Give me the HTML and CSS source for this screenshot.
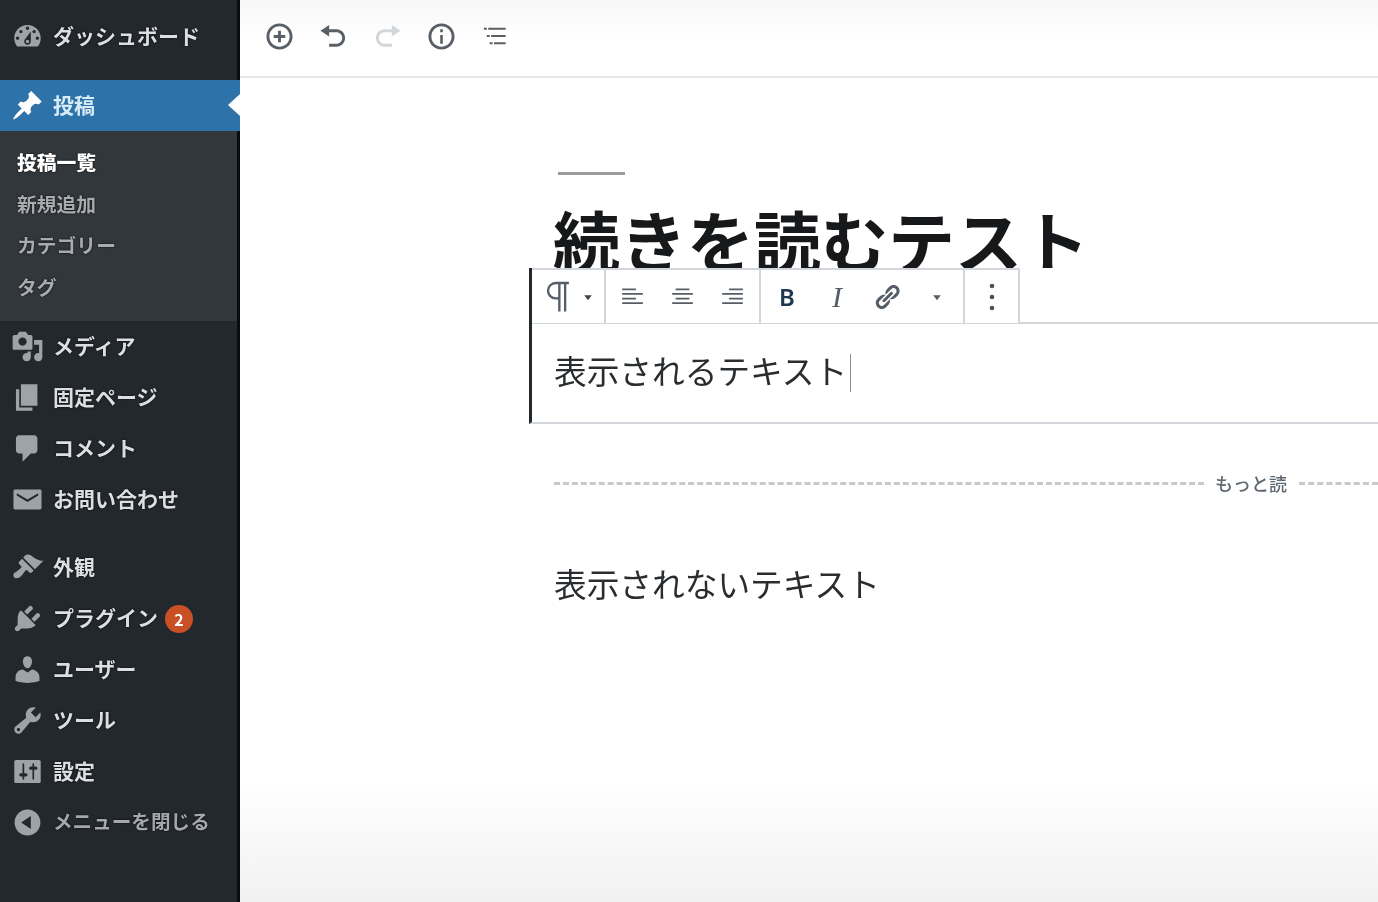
FILE: index.html
```html
<!DOCTYPE html>
<html lang="ja">
<head>
    <meta charset="UTF-8">
    <meta name="viewport" content="width=device-width, initial-scale=1.0">
    <title>投稿を編集</title>
    <link rel="stylesheet" href="styles.css">
</head>
<body>

<div class="app">
    <nav class="sidebar">
        <ul class="menu menu-first">
            <li class="menu-item">
                <svg class="menu-icon" viewBox="0 0 20 20"><path d="M3.76 16h12.48c1.1-1.37 1.76-3.11 1.76-5 0-4.42-3.58-8-8-8s-8 3.58-8 8c0 1.89.66 3.63 1.76 5zM10 4c.55 0 1 .45 1 1s-.45 1-1 1-1-.45-1-1 .45-1 1-1zM6 6c.55 0 1 .45 1 1s-.45 1-1 1-1-.45-1-1 .45-1 1-1zm8 0c.55 0 1 .45 1 1s-.45 1-1 1-1-.45-1-1 .45-1 1-1zm-5.37 5.55L12 7v6c0 1.1-.9 2-2 2s-2-.9-2-2c0-.57.24-1.08.63-1.45zM4 10c.55 0 1 .45 1 1s-.45 1-1 1-1-.45-1-1 .45-1 1-1zm12 0c.55 0 1 .45 1 1s-.45 1-1 1-1-.45-1-1 .45-1 1-1zm-5 3c0-.55-.45-1-1-1s-1 .45-1 1 .45 1 1 1 1-.45 1-1z"/></svg>
                <span class="menu-label">ダッシュボード</span>
            </li>
        </ul>
        <ul class="menu menu-posts">
            <li class="menu-item active">
                <svg class="menu-icon" viewBox="0 0 20 20"><path d="M10.44 3.02l1.82-1.82 6.36 6.35-1.83 1.82c-1.05-.68-2.48-.57-3.41.36l-.75.75c-.92.93-1.04 2.35-.35 3.41l-1.83 1.82-2.41-2.41-2.8 2.79c-.42.42-3.38 2.71-3.8 2.29s1.86-3.39 2.28-3.81l2.79-2.79L4.1 9.36l1.83-1.82c1.05.69 2.48.57 3.4-.36l.75-.75c.93-.92 1.05-2.35.36-3.41z"/></svg>
                <span class="menu-label">投稿</span>
            </li>
        </ul>
        <ul class="submenu">
            <li class="current">投稿一覧</li>
            <li>新規追加</li>
            <li>カテゴリー</li>
            <li>タグ</li>
        </ul>
        <ul class="menu">
            <li class="menu-item">
                <svg class="menu-icon" viewBox="0 0 20 20"><path d="M13 11V4c0-.55-.45-1-1-1h-1.67L9 1H5L3.67 3H2c-.55 0-1 .45-1 1v7c0 .55.45 1 1 1h10c.55 0 1-.45 1-1zM7 4.5c1.38 0 2.5 1.12 2.5 2.5S8.38 9.5 7 9.5 4.5 8.38 4.5 7 5.62 4.5 7 4.5zM14 6h5v10.5c0 1.38-1.12 2.5-2.5 2.5S14 17.88 14 16.5s1.12-2.5 2.5-2.5c.17 0 .34.02.5.05V9h-3V6zm-4 8.05V13h2v3.5c0 1.38-1.12 2.5-2.5 2.5S7 17.88 7 16.5 8.12 14 9.5 14c.17 0 .34.02.5.05z"/></svg>
                <span class="menu-label">メディア</span>
            </li>
            <li class="menu-item">
                <svg class="menu-icon" viewBox="0 0 20 20"><path d="M6 15V2h10v13H6zm-1 1h8v2H3V5h2v11z"/></svg>
                <span class="menu-label">固定ページ</span>
            </li>
            <li class="menu-item">
                <svg class="menu-icon" viewBox="0 0 20 20"><path d="M5 2h9c1.1 0 2 .9 2 2v7c0 1.1-.9 2-2 2h-2l-5 5v-5H5c-1.1 0-2-.9-2-2V4c0-1.1.9-2 2-2z"/></svg>
                <span class="menu-label">コメント</span>
            </li>
            <li class="menu-item">
                <svg class="menu-icon" viewBox="0 0 20 20"><path fill-rule="evenodd" d="M2.5 4h15c.55 0 1 .45 1 1v10c0 .55-.45 1-1 1h-15c-.55 0-1-.45-1-1V5c0-.55.45-1 1-1zm1 2.2v1.3l6.5 4 6.5-4V6.2L10 10z"/></svg>
                <span class="menu-label">お問い合わせ</span>
            </li>
        </ul>
        <ul class="menu menu-lower">
            <li class="menu-item">
                <svg class="menu-icon" viewBox="0 0 20 20"><path d="M14.48 11.06L7.41 3.99l1.5-1.5c.5-.56 2.3-.47 3.51.32 1.21.8 1.43 1.28 2.91 2.1 1.18.64 2.45 1.26 4.45.85zm-.71.71L6.7 4.7 4.93 6.47c-.39.39-.39 1.02 0 1.41l1.06 1.06c.39.39.39 1.03 0 1.42-.6.6-1.43 1.11-2.21 1.69-.35.26-.7.53-1.01.84C1.43 13.23.99 14.95 2.03 16c1.04 1 2.78.57 4.13-.79.31-.31.58-.66.85-1.01.58-.78 1.09-1.61 1.69-2.21.39-.39 1.02-.39 1.41 0l1.06 1.06c.39.39 1.02.39 1.41 0z"/></svg>
                <span class="menu-label">外観</span>
            </li>
            <li class="menu-item">
                <svg class="menu-icon" viewBox="0 0 20 20"><path d="M13.11 4.36L9.87 7.6 8 5.73l3.24-3.24c.35-.34 1.05-.2 1.56.32.52.51.66 1.21.31 1.55zm-8 1.77l.91-1.12 9.01 9.01-1.19.84c-.71.71-2.63 1.16-3.82 1.16H6.14L4.9 17.26c-.59.59-1.54.59-2.12 0-.59-.58-.59-1.53 0-2.12l1.24-1.24v-3.88c0-1.13.4-3.19 1.09-3.89zm7.26 3.97l3.24-3.24c.34-.35 1.04-.21 1.55.31.52.51.66 1.21.31 1.55l-3.24 3.25z"/></svg>
                <span class="menu-label">プラグイン</span>
                <span class="badge">2</span>
            </li>
            <li class="menu-item">
                <svg class="menu-icon" viewBox="0 0 20 20"><path d="M10 9.25c-2.27 0-2.73-3.44-2.73-3.44C7 4.02 7.82 2 9.97 2c2.16 0 2.98 2.02 2.71 3.81 0 0-.41 3.44-2.68 3.44zm0 2.57L12.72 10c2.39 0 4.52 2.33 4.52 4.53v2.49s-3.65 1.13-7.24 1.13c-3.65 0-7.24-1.13-7.24-1.13v-2.49c0-2.25 1.94-4.48 4.47-4.48z"/></svg>
                <span class="menu-label">ユーザー</span>
            </li>
            <li class="menu-item">
                <svg class="menu-icon" viewBox="0 0 20 20"><path d="M16.68 9.77c-1.34 1.34-3.3 1.67-4.95.99l-5.41 6.52c-.99.99-2.59.99-3.58 0s-.99-2.59 0-3.57l6.52-5.42c-.68-1.65-.35-3.61.99-4.95 1.28-1.28 3.12-1.62 4.72-1.06l-2.89 2.89 2.82 2.82 2.86-2.87c.53 1.58.18 3.39-1.08 4.65zM3.81 16.21c.4.39 1.04.39 1.43 0 .4-.4.4-1.04 0-1.43-.39-.4-1.03-.4-1.43 0-.39.39-.39 1.03 0 1.43z"/></svg>
                <span class="menu-label">ツール</span>
            </li>
            <li class="menu-item">
                <svg class="menu-icon" viewBox="0 0 20 20"><path d="M18 16V4c0-.55-.45-1-1-1H3c-.55 0-1 .45-1 1v12c0 .55.45 1 1 1h14c.55 0 1-.45 1-1zM8 11h1c.55 0 1 .45 1 1s-.45 1-1 1H8v1.5c0 .28-.22.5-.5.5s-.5-.22-.5-.5V13H6c-.55 0-1-.45-1-1s.45-1 1-1h1V5.5c0-.28.22-.5.5-.5s.5.22.5.5V11zm5-2h-1c-.55 0-1-.45-1-1s.45-1 1-1h1V5.5c0-.28.22-.5.5-.5s.5.22.5.5V7h1c.55 0 1 .45 1 1s-.45 1-1 1h-1v5.5c0 .28-.22.5-.5.5s-.5-.22-.5-.5V9z"/></svg>
                <span class="menu-label">設定</span>
            </li>
            <li class="menu-item collapse">
                <svg class="menu-icon" viewBox="0 0 20 20"><path d="M10 2.16c4.33 0 7.84 3.51 7.84 7.84s-3.51 7.84-7.84 7.84S2.16 14.33 2.16 10 5.71 2.16 10 2.16zm2 11.72V6.12L6.18 9.97z"/></svg>
                <span class="menu-label">メニューを閉じる</span>
            </li>
        </ul>
    </nav>

    <main class="main">
        <header class="topbar">
            <div class="top-btn">
                <svg viewBox="0 0 20 20"><path d="M10 1c-5 0-9 4-9 9s4 9 9 9 9-4 9-9-4-9-9-9zm0 16c-3.9 0-7-3.1-7-7s3.1-7 7-7 7 3.1 7 7-3.1 7-7 7zm1-11H9v3H6v2h3v3h2v-3h3V9h-3V6z"/></svg>
            </div>
            <div class="top-btn">
                <svg viewBox="0 0 20 20"><path d="M12 5H7V2L1 6l6 4V7h5c2.2 0 4 1.8 4 4s-1.8 4-4 4H7v2h5c3.3 0 6-2.7 6-6s-2.7-6-6-6z"/></svg>
            </div>
            <div class="top-btn disabled">
                <svg viewBox="0 0 20 20"><path d="M8 5h5V2l6 4-6 4V7H8c-2.2 0-4 1.8-4 4s1.8 4 4 4h5v2H8c-3.3 0-6-2.7-6-6s2.7-6 6-6z"/></svg>
            </div>
            <div class="top-btn">
                <svg viewBox="0 0 20 20"><path d="M10 1c-5 0-9 4-9 9s4 9 9 9 9-4 9-9-4-9-9-9zm0 16c-3.9 0-7-3.1-7-7s3.1-7 7-7 7 3.1 7 7-3.1 7-7 7zM9.1 9h1.8v6H9.1zm0-4h1.8v2H9.1z"/></svg>
            </div>
            <div class="top-btn">
                <svg viewBox="0 0 20 20"><path d="M2 4h2v1.4H2zm3 0h12v1.4H5zM4 9h2v1.4H4zm3 0h10v1.4H7zm-1 5h2v1.4H6zm3 0h8v1.4H9z"/></svg>
            </div>
        </header>

        <section class="editor">
            <div class="title-area">
                <div class="title-sep"></div>
                <h1 class="post-title">続きを読むテスト</h1>
            </div>

            <div class="block selected">
                <div class="block-toolbar">
                    <div class="tool-group group-type">
                        <svg class="tool-para" viewBox="0 0 20 20"><path d="M15.5 2.2H8.2a4.3 4.3 0 0 0 0 8.6h1.6M10.2 2.2V18M13.4 2.2V18"/></svg>
                        <svg class="caret" viewBox="0 0 8 8"><path d="M1 2.5h6L4 6.5z"/></svg>
                    </div>
                    <div class="tool-group group-align">
                        <div class="tool"><svg viewBox="0 0 20 20"><path d="M1 3h12v1.5H1zm0 4h18v1.5H1zm0 4h12v1.5H1zm0 4h18v1.5H1z"/></svg></div>
                        <div class="tool"><svg viewBox="0 0 20 20"><path d="M4 3h12v1.5H4zM1 7h18v1.5H1zm3 4h12v1.5H4zm-3 4h18v1.5H1z"/></svg></div>
                        <div class="tool"><svg viewBox="0 0 20 20"><path d="M7 3h12v1.5H7zM1 7h18v1.5H1zm6 4h12v1.5H7zm-6 4h18v1.5H1z"/></svg></div>
                    </div>
                    <div class="tool-group group-format">
                        <div class="tool tool-bold">B</div>
                        <div class="tool tool-italic">I</div>
                        <div class="tool tool-link"><svg viewBox="0 0 20 20"><path d="M17.74 2.76c1.68 1.69 1.68 4.41 0 6.1l-1.53 1.52c-1.12 1.12-2.7 1.47-4.14 1.09l2.62-2.61.76-.77.76-.76c.84-.84.84-2.2 0-3.04-.84-.85-2.2-.85-3.04 0l-.77.76-3.38 3.38c-.37-1.44-.02-3.02 1.1-4.14l1.52-1.53c1.69-1.68 4.42-1.68 6.1 0zM8.59 13.43l5.34-5.34c.42-.42.42-1.1 0-1.52-.44-.43-1.13-.39-1.53 0l-5.33 5.34c-.42.42-.42 1.1 0 1.52.44.43 1.13.39 1.52 0zm-.76 2.29l4.14-4.15c.38 1.44.03 3.02-1.09 4.14l-1.52 1.53c-1.69 1.68-4.41 1.68-6.1 0-1.68-1.68-1.68-4.42 0-6.1l1.53-1.52c1.12-1.12 2.7-1.47 4.14-1.1l-4.14 4.15c-.85.84-.85 2.2 0 3.05.84.84 2.2.84 3.04 0z"/></svg></div>
                        <div class="tool tool-caret"><svg class="caret" viewBox="0 0 8 8"><path d="M1 2.5h6L4 6.5z"/></svg></div>
                    </div>
                    <div class="tool-group group-more">
                        <svg class="tool-dots" viewBox="0 0 6 30"><circle cx="3" cy="4" r="2.3"/><circle cx="3" cy="15" r="2.3"/><circle cx="3" cy="26" r="2.3"/></svg>
                    </div>
                </div>
                <div class="block-body">
                    <p class="para">表示されるテキスト</p>
                    <span class="cursor"></span>
                </div>
            </div>

            <div class="more-block">
                <div class="more-line more-line-left"></div>
                <span class="more-label">もっと読む</span>
                <div class="more-line"></div>
            </div>

            <p class="para para-plain">表示されないテキスト</p>
        </section>
    </main>
</div>

</body>
</html>
```

FILE: styles.css
```css
* {
    box-sizing: border-box;
}
html, body {
    height: 100%;
}
body {
    margin: 0;
    overflow: hidden;
    font-family: "Noto Sans CJK JP", "Noto Sans", sans-serif;
    background-color: #fff;
}
ul {
    list-style: none;
    margin: 0;
    padding: 0;
}
.app {
    display: flex;
    height: 902px;
    filter: blur(0.7px);
}

/* sidebar */
.sidebar {
    width: 240px;
    flex-shrink: 0;
    background-color: #23282d;
    border-right: 3px solid #0b0c0d;
    padding-top: 11px;
}
.menu-first {
    margin-bottom: 18px;
}
.menu-lower {
    margin-top: 17px;
}
.menu-item {
    display: flex;
    align-items: center;
    height: 51px;
    padding-left: 11px;
    font-size: 21px;
    font-weight: 700;
    color: #dcdfe1;
    text-shadow: 0 0 2px #000;
    white-space: nowrap;
}
.menu-label {
    padding-bottom: 4px;
}
.menu-icon {
    width: 33px;
    height: 33px;
    margin-right: 9px;
    flex-shrink: 0;
    fill: #9ea3a8;
}
.menu-item.active {
    position: relative;
    margin-right: -3px;
    background-color: #2d72a9;
    color: #d8ecf7;
    text-shadow: none;
}
.menu-item.active .menu-icon {
    fill: #fff;
}
.menu-item.active::after {
    content: "";
    position: absolute;
    right: 0;
    top: 14px;
    border-style: solid;
    border-width: 11.5px 12px 11.5px 0;
    border-color: transparent #fff transparent transparent;
}
.menu-item.collapse {
    color: #a4a8ac;
    font-size: 19.6px;
}
.badge {
    width: 28px;
    height: 28px;
    margin-left: 7px;
    border-radius: 50%;
    background-color: #c94f24;
    color: #fff;
    font-size: 16px;
    line-height: 28px;
    text-align: center;
    text-shadow: none;
}
.submenu {
    background-color: #32373c;
    height: 190px;
    padding-top: 10px;
}
.submenu li {
    height: 41.5px;
    line-height: 41.5px;
    padding-left: 17px;
    font-size: 19.8px;
    font-weight: 700;
    color: #a9acaf;
    text-shadow: 0 0 2px #000;
}
.submenu li.current {
    color: #fff;
    font-weight: 900;
}

/* top bar */
.main {
    flex: 1;
    min-width: 0;
    background: linear-gradient(to bottom, #fff 780px, #f1f1f1 902px);
}
.topbar {
    display: flex;
    align-items: center;
    height: 78px;
    padding-left: 12px;
    padding-bottom: 4px;
    background: linear-gradient(to bottom, #f7f7f7, #fff 40px);
    border-bottom: 2px solid #e8e8e8;
}
.top-btn {
    display: flex;
    align-items: center;
    justify-content: center;
    width: 54px;
}
.top-btn svg {
    width: 29px;
    height: 29px;
    fill: #585f66;
}
.top-btn.disabled svg {
    fill: #d3d6d8;
}

/* editor */
.editor {
    padding-left: 289px;
}
.title-area {
    height: 190px;
    overflow: hidden;
    padding-top: 94px;
}
.title-sep {
    width: 67px;
    height: 3px;
    margin-left: 29px;
    background-color: #9b9b9b;
}
.post-title {
    margin: 16px 0 0 24px;
    font-size: 67px;
    font-weight: 700;
    line-height: 96px;
    color: #16181a;
    white-space: nowrap;
}
.block.selected {
    border-left: 3px solid #23282d;
    border-bottom: 2px solid #d2d6da;
}
.block-toolbar {
    display: flex;
    height: 56px;
    border-bottom: 2px solid #d2d6da;
}
.tool-group {
    display: flex;
    align-items: center;
    height: 55px;
    background-color: #fff;
    border-top: 2px solid #d2d6da;
    border-right: 2px solid #d2d6da;
}
.group-type {
    width: 74px;
    padding-left: 9px;
}
.group-align {
    width: 155px;
    padding-left: 1px;
}
.group-format {
    width: 204px;
    padding-left: 1px;
}
.group-more {
    width: 55px;
    justify-content: center;
}
.tool {
    display: flex;
    align-items: center;
    justify-content: center;
    width: 50px;
    height: 100%;
}
.tool svg {
    width: 23px;
    height: 23px;
    fill: #555d66;
}
.tool-link svg {
    width: 28px;
    height: 28px;
}
.tool-para {
    width: 36px;
    height: 36px;
    flex-shrink: 0;
    fill: none;
    stroke: #555d66;
    stroke-width: 1.3;
}
.caret {
    width: 10px;
    height: 10px;
    fill: #3f464d;
}
.group-type .caret {
    margin-left: 6px;
}
.tool svg.caret {
    width: 10px;
    height: 10px;
}
.tool-bold {
    font-family: "Noto Sans", sans-serif;
    font-size: 24px;
    font-weight: 600;
    color: #1f3650;
}
.tool-italic {
    font-family: "Liberation Serif", serif;
    font-size: 30px;
    font-style: italic;
    color: #555d66;
}
.tool-dots {
    width: 6px;
    height: 30px;
    fill: #4a5158;
}
.block-body {
    display: flex;
    align-items: center;
    height: 98px;
    padding-left: 22px;
}
.para {
    margin: 0 0 6px;
    font-size: 32.7px;
    line-height: 48px;
    color: #2a2d30;
    white-space: nowrap;
}
.cursor {
    width: 1px;
    height: 38px;
    margin-left: 3px;
    background-color: #8a8f94;
}

/* read more */
.more-block {
    display: flex;
    align-items: center;
    margin: 47px 0 0 25px;
    height: 24px;
}
.more-line {
    flex: 1;
    border-top: 3px dashed #c6cacd;
}
.more-line-left {
    flex: none;
    width: 650px;
}
.more-label {
    width: 73px;
    margin: 0 11px;
    overflow: hidden;
    font-size: 18px;
    font-weight: 500;
    line-height: 24px;
    color: #5f6871;
    white-space: nowrap;
}
.para-plain {
    margin: 64px 0 0 25px;
}
```
